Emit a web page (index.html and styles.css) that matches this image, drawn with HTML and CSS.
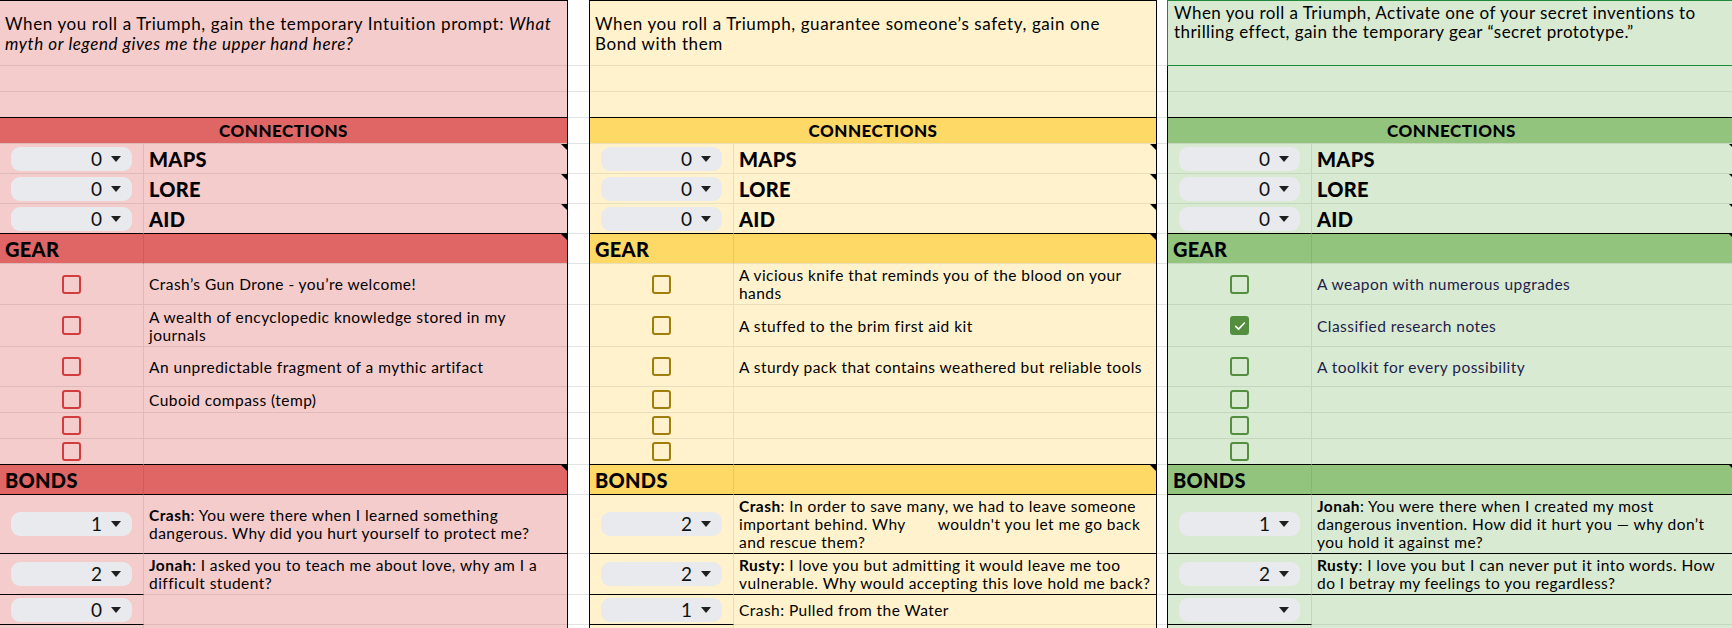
FILE: index.html
```html
<!DOCTYPE html>
<html>
<head>
<meta charset="utf-8">
<link rel="stylesheet" href="styles.css">
</head>
<body>
<div class="sheet">

  <!-- LEFT PANEL -->
  <div class="panel red">
    <div class="cell wide intro topb"><p>When you roll a Triumph, gain the temporary Intuition prompt: <i>What</i><br><i>myth or legend gives me the upper hand here?</i></p></div>
    <div class="cell wide"></div>
    <div class="cell wide blk"></div>
    <div class="cell wide head">CONNECTIONS</div>
    <div class="cell chk"><div class="chip"><span class="num">0</span><span class="caret"></span></div></div>
    <div class="cell txt lbl note">MAPS</div>
    <div class="cell chk"><div class="chip"><span class="num">0</span><span class="caret"></span></div></div>
    <div class="cell txt lbl note">LORE</div>
    <div class="cell chk blk"><div class="chip"><span class="num">0</span><span class="caret"></span></div></div>
    <div class="cell txt lbl note blk">AID</div>
    <div class="cell chk hd lbl sec">GEAR</div>
    <div class="cell txt hd note"></div>
    <div class="cell chk"><span class="cb"></span></div>
    <div class="cell txt"><span>Crash’s Gun Drone - you’re welcome!</span></div>
    <div class="cell chk"><span class="cb"></span></div>
    <div class="cell txt"><span>A wealth of encyclopedic knowledge stored in my<br>journals</span></div>
    <div class="cell chk"><span class="cb"></span></div>
    <div class="cell txt"><span>An unpredictable fragment of a mythic artifact</span></div>
    <div class="cell chk"><span class="cb"></span></div>
    <div class="cell txt"><span>Cuboid compass (temp)</span></div>
    <div class="cell chk"><span class="cb"></span></div>
    <div class="cell txt"></div>
    <div class="cell chk blk"><span class="cb"></span></div>
    <div class="cell txt blk"></div>
    <div class="cell chk hd lbl sec blk">BONDS</div>
    <div class="cell txt hd note blk"></div>
    <div class="cell chk blk"><div class="chip"><span class="num">1</span><span class="caret"></span></div></div>
    <div class="cell txt blk"><span><b>Crash</b>: You were there when I learned something<br>dangerous. Why did you hurt yourself to protect me?</span></div>
    <div class="cell chk blk"><div class="chip"><span class="num">2</span><span class="caret"></span></div></div>
    <div class="cell txt top"><span><b>Jonah</b>: I asked you to teach me about love, why am I a<br>difficult student?</span></div>
    <div class="cell chk blk"><div class="chip"><span class="num">0</span><span class="caret"></span></div></div>
    <div class="cell txt"></div>
    <div class="cell chk"></div>
    <div class="cell txt"></div>
  </div>

  <!-- GAP 1a -->
  <div class="gap"><div></div><div></div><div></div><div></div><div></div><div></div><div></div><div></div><div></div><div></div><div></div><div></div><div></div><div></div><div></div><div></div><div></div><div></div><div></div></div>
  <!-- GAP 1b -->
  <div class="gap"><div></div><div></div><div></div><div></div><div></div><div></div><div></div><div></div><div></div><div></div><div></div><div></div><div></div><div></div><div></div><div></div><div></div><div></div><div></div></div>

  <!-- MIDDLE PANEL -->
  <div class="panel yellow">
    <div class="cell wide intro topb"><p>When you roll a Triumph, guarantee someone’s safety, gain one<br>Bond with them</p></div>
    <div class="cell wide"></div>
    <div class="cell wide blk"></div>
    <div class="cell wide head">CONNECTIONS</div>
    <div class="cell chk"><div class="chip"><span class="num">0</span><span class="caret"></span></div></div>
    <div class="cell txt lbl note">MAPS</div>
    <div class="cell chk"><div class="chip"><span class="num">0</span><span class="caret"></span></div></div>
    <div class="cell txt lbl note">LORE</div>
    <div class="cell chk blk"><div class="chip"><span class="num">0</span><span class="caret"></span></div></div>
    <div class="cell txt lbl note blk">AID</div>
    <div class="cell chk hd lbl sec">GEAR</div>
    <div class="cell txt hd note"></div>
    <div class="cell chk"><span class="cb"></span></div>
    <div class="cell txt"><span>A vicious knife that reminds you of the blood on your<br>hands</span></div>
    <div class="cell chk"><span class="cb"></span></div>
    <div class="cell txt"><span>A stuffed to the brim first aid kit</span></div>
    <div class="cell chk"><span class="cb"></span></div>
    <div class="cell txt"><span>A sturdy pack that contains weathered but reliable tools</span></div>
    <div class="cell chk"><span class="cb"></span></div>
    <div class="cell txt"></div>
    <div class="cell chk"><span class="cb"></span></div>
    <div class="cell txt"></div>
    <div class="cell chk blk"><span class="cb"></span></div>
    <div class="cell txt blk"></div>
    <div class="cell chk hd lbl sec blk">BONDS</div>
    <div class="cell txt hd note blk"></div>
    <div class="cell chk blk"><div class="chip"><span class="num">2</span><span class="caret"></span></div></div>
    <div class="cell txt blk"><span><b>Crash</b>: In order to save many, we had to leave someone<br>important behind. Why<span class="sp"></span>wouldn't you let me go back<br>and rescue them?</span></div>
    <div class="cell chk blk"><div class="chip"><span class="num">2</span><span class="caret"></span></div></div>
    <div class="cell txt blk top"><span><b>Rusty:</b> I love you but admitting it would leave me too<br>vulnerable. Why would accepting this love hold me back?</span></div>
    <div class="cell chk blk"><div class="chip"><span class="num">1</span><span class="caret"></span></div></div>
    <div class="cell txt"><span>Crash: Pulled from the Water</span></div>
    <div class="cell chk"></div>
    <div class="cell txt"></div>
  </div>

  <!-- GAP 2 -->
  <div class="gap"><div></div><div></div><div></div><div></div><div></div><div></div><div></div><div></div><div></div><div></div><div></div><div></div><div></div><div></div><div></div><div></div><div></div><div></div><div></div></div>

  <!-- RIGHT PANEL -->
  <div class="panel green">
    <div class="cell wide intro sel"><p>When you roll a Triumph, Activate one of your secret inventions to<br>thrilling effect, gain the temporary gear “secret prototype.”</p></div>
    <div class="cell wide"></div>
    <div class="cell wide blk"></div>
    <div class="cell wide head">CONNECTIONS</div>
    <div class="cell chk"><div class="chip"><span class="num">0</span><span class="caret"></span></div></div>
    <div class="cell txt lbl note">MAPS</div>
    <div class="cell chk"><div class="chip"><span class="num">0</span><span class="caret"></span></div></div>
    <div class="cell txt lbl note">LORE</div>
    <div class="cell chk blk"><div class="chip"><span class="num">0</span><span class="caret"></span></div></div>
    <div class="cell txt lbl note blk">AID</div>
    <div class="cell chk hd lbl sec">GEAR</div>
    <div class="cell txt hd note"></div>
    <div class="cell chk"><span class="cb"></span></div>
    <div class="cell txt navy"><span>A weapon with numerous upgrades</span></div>
    <div class="cell chk"><span class="cb on"><svg viewBox="0 0 16 16" width="14" height="14"><path d="M3 8.4 6.4 11.6 13 4.6" fill="none" stroke="#fff" stroke-width="1.8" stroke-linecap="round" stroke-linejoin="round"/></svg></span></div>
    <div class="cell txt navy"><span>Classified research notes</span></div>
    <div class="cell chk"><span class="cb"></span></div>
    <div class="cell txt navy"><span>A toolkit for every possibility</span></div>
    <div class="cell chk"><span class="cb"></span></div>
    <div class="cell txt"></div>
    <div class="cell chk"><span class="cb"></span></div>
    <div class="cell txt"></div>
    <div class="cell chk blk"><span class="cb"></span></div>
    <div class="cell txt blk"></div>
    <div class="cell chk hd lbl sec blk">BONDS</div>
    <div class="cell txt hd note blk"></div>
    <div class="cell chk blk"><div class="chip"><span class="num">1</span><span class="caret"></span></div></div>
    <div class="cell txt blk"><span><b>Jonah</b>: You were there when I created my most<br>dangerous invention. How did it hurt you — why don’t<br>you hold it against me?</span></div>
    <div class="cell chk blk"><div class="chip"><span class="num">2</span><span class="caret"></span></div></div>
    <div class="cell txt blk top"><span><b>Rusty</b>: I love you but I can never put it into words. How<br>do I betray my feelings to you regardless?</span></div>
    <div class="cell chk blk"><div class="chip"><span class="num"></span><span class="caret"></span></div></div>
    <div class="cell txt"></div>
    <div class="cell chk"></div>
    <div class="cell txt"></div>
  </div>

</div>
</body>
</html>
```

FILE: styles.css
```css
* { box-sizing: border-box; }

html, body {
  margin: 0;
  padding: 0;
  background: #ffffff;
  overflow: hidden;
}

body {
  width: 1732px;
  height: 628px;
  font-family: Lato, "Liberation Sans", sans-serif;
  color: #000;
}

p { margin: 0; }

.sheet {
  display: grid;
  grid-template-columns: 568px 11px 10px 568px 10px 568px;
  align-items: start;
}

.panel,
.gap {
  display: grid;
  grid-template-rows: 66px 26px 26px 26px 30px 30px 30px 30px 41px 42px 40px 26px 26px 26px 30px 59px 41px 30px 30px;
}

.panel {
  grid-template-columns: 144px 1fr;
  border-right: 1px solid #000;
}

.yellow,
.green {
  border-left: 1px solid #000;
}

.green {
  border-right: none;
}

.gap > div {
  border-bottom: 1px solid #e2e3e3;
}

.gap:first-of-type {
  border-right: 1px solid #e2e3e3;
}

.cell {
  position: relative;
  display: flex;
  align-items: center;
  min-width: 0;
  border-bottom: 1px solid var(--grid);
}

.wide {
  grid-column: 1 / 3;
}

.chk {
  justify-content: center;
  border-right: 1px solid var(--grid);
}

.txt {
  padding: 0 2px 0 5px;
  font-size: 15.5px;
  line-height: 18px;
  letter-spacing: 0.45px;
  white-space: nowrap;
}

.txt.top {
  align-items: flex-start;
  padding-top: 2px;
}

.intro {
  align-items: flex-start;
  padding: 13px 2px 0 5px;
  font-size: 17px;
  line-height: 20px;
  letter-spacing: 0.6px;
  white-space: nowrap;
}

.topb {
  border-top: 1px solid #000;
}

.sel {
  padding-top: 3px;
  padding-left: 6px;
  line-height: 18.5px;
  letter-spacing: 0.45px;
  border: 1px solid #1e8a3a;
  margin-left: -1px;
}

.blk {
  border-bottom-color: #000;
}

.head {
  justify-content: center;
  font-weight: 900;
  font-size: 17px;
  letter-spacing: 0.5px;
  background: var(--head);
}

.hd {
  background: var(--head);
}

.chk.hd {
  border-right-color: var(--hdiv);
}

.lbl {
  font-weight: 900;
  font-size: 20px;
  letter-spacing: 0.3px;
}

.sec {
  justify-content: flex-start;
  padding-left: 5px;
}

.note::after {
  content: "";
  position: absolute;
  top: 0;
  right: 0;
  border-left: 6px solid transparent;
  border-top: 6px solid #000;
}

.navy {
  color: #1d1d4a;
}

.sp {
  display: inline-block;
  width: 32px;
}

/* dropdown chip */
.chip {
  width: 121px;
  height: 24px;
  border-radius: 9px;
  background: #e8eaed;
  display: flex;
  align-items: center;
  justify-content: flex-end;
  gap: 9px;
  padding-right: 11px;
}

.num {
  font-size: 19px;
  line-height: 24px;
  color: #111;
}

.caret {
  width: 0;
  height: 0;
  border-left: 5px solid transparent;
  border-right: 5px solid transparent;
  border-top: 6px solid #1f1f1f;
}

/* checkbox */
.cb {
  width: 19px;
  height: 19px;
  border: 2.5px solid var(--cb);
  border-radius: 3px;
  display: flex;
  align-items: center;
  justify-content: center;
}

.cb.on {
  background: var(--cb);
}

/* themes */
.red {
  background: #f4cccc;
  --grid: #dfbaba;
  --head: #e06666;
  --hdiv: #cd5c5c;
  --cb: #d23c3c;
}

.yellow {
  background: #fff2cc;
  --grid: #ebdfbb;
  --head: #ffd966;
  --hdiv: #e9c75c;
  --cb: #a17d0c;
}

.green {
  background: #d9ead3;
  --grid: #c5d6bf;
  --head: #93c47d;
  --hdiv: #86b471;
  --cb: #548f3f;
}
```
